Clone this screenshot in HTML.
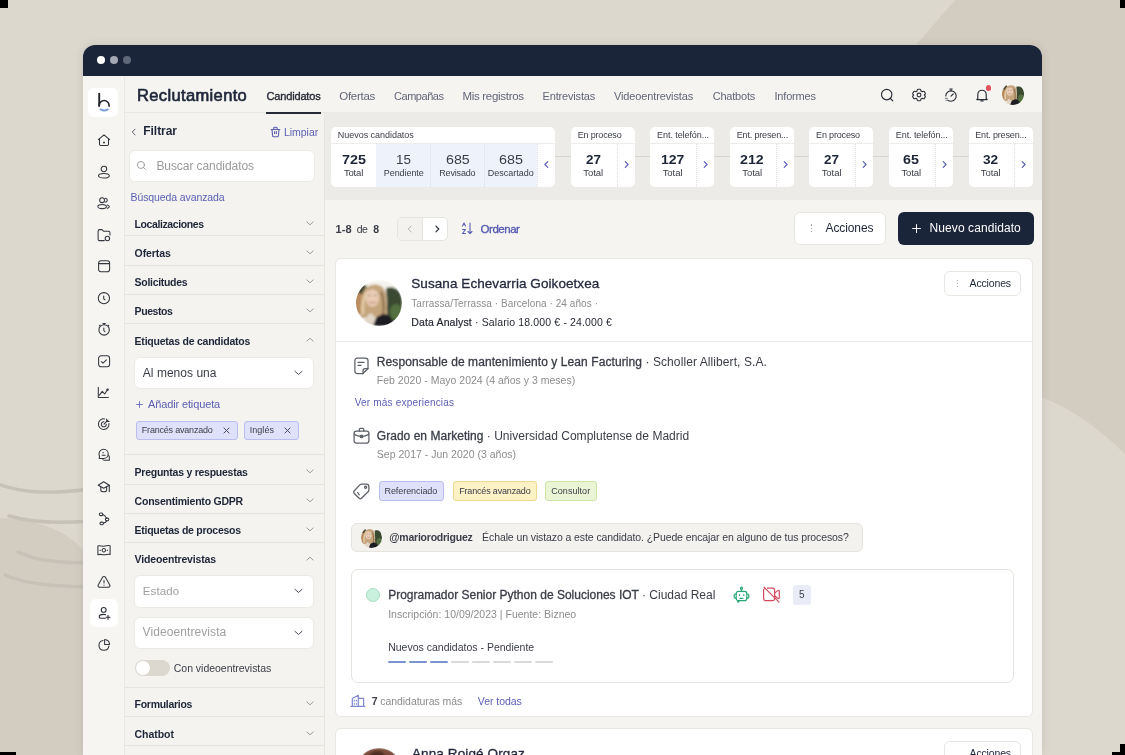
<!DOCTYPE html>
<html><head><meta charset="utf-8"><style>
html,body{margin:0;padding:0;width:1125px;height:755px;overflow:hidden;position:relative;background:#dcd8ce}
.t{position:absolute;white-space:nowrap;line-height:0;font-family:"Liberation Sans",sans-serif}
svg{overflow:visible}
</style></head><body><div id="root" style="position:absolute;left:0;top:0;width:1125px;height:755px;overflow:hidden;will-change:transform">
<svg width="1125" height="755" style="position:absolute;left:0;top:0">
<rect width="1125" height="755" fill="#dcd8ce"/>
<path d="M955 0 L916 45 C860 120 900 330 1043 398 Q1082 412 1125 454 L1125 0 Z" fill="#d3ccc1"/>
<path d="M0 518 C20 519 40 522 60 532 C75 540 83 549 90 560 L90 755 L0 755 Z" fill="#d3ccc1"/>
<g fill="none" stroke="#c7c2b8" stroke-width="3.4" stroke-linecap="round">
<path d="M-2 484 C20 492 45 495 90 489"/>
<path d="M9 516 C30 522 55 524 90 521"/>
<path d="M18 552 C35 560 55 563 90 563"/>
<path d="M5 575 C25 584 50 586 90 587"/>
</g>
</svg>
<div style="position:absolute;left:0px;top:0px;width:8px;height:8px;background:#000"></div>
<div style="position:absolute;left:1120px;top:0px;width:5px;height:8px;background:#000"></div>
<div style="position:absolute;left:0px;top:752px;width:16px;height:3px;background:#000"></div>
<div style="position:absolute;left:1120px;top:744px;width:5px;height:11px;background:#000"></div>
<div style="position:absolute;left:1112px;top:752px;width:13px;height:3px;background:#000"></div>
<div style="position:absolute;left:83px;top:45px;width:959px;height:710px;background:#f4f3ef;border-radius:12px 12px 0 0;box-shadow:0 0 9px rgba(70,60,50,0.13)"></div>
<div style="position:absolute;left:83px;top:45px;width:959px;height:31px;background:#1b2539;border-radius:12px 12px 0 0"></div>
<div style="position:absolute;left:96.5px;top:56px;width:8px;height:8px;border-radius:50%;background:#fff"></div>
<div style="position:absolute;left:109.5px;top:56px;width:8px;height:8px;border-radius:50%;background:#a3a8b2"></div>
<div style="position:absolute;left:122.5px;top:56px;width:8px;height:8px;border-radius:50%;background:#5f6878"></div>
<div style="position:absolute;left:83px;top:76px;width:41px;height:679px;background:#f6f5f1;border-right:1px solid #e9e7e2"></div>
<div style="position:absolute;left:125px;top:76px;width:917px;height:36px;background:#f5f4f0"></div>
<div style="position:absolute;left:125px;top:112px;width:199px;height:643px;background:#f4f3ef;border-right:1px solid #e7e5e0"></div>
<div style="position:absolute;left:125px;top:112px;width:200px;height:1px;background:#e9e7e2"></div>
<div style="position:absolute;left:325px;top:112px;width:717px;height:87.6px;background:#ecebe7"></div>
<div style="position:absolute;left:325px;top:199.6px;width:717px;height:555.4px;background:#f5f4f0"></div>
<div style="position:absolute;left:88px;top:88px;width:29.5px;height:29px;background:#fff;border-radius:6px"></div>
<svg style="position:absolute;left:88px;top:88px" width="30" height="30" viewBox="0 0 30 30">
<path d="M11.2 5.8 V18" fill="none" stroke="#22252d" stroke-width="1.9" stroke-linecap="round"/>
<path d="M11.2 17.5 A4.95 4.95 0 0 1 21.1 17.5 V18.2" fill="none" stroke="#22252d" stroke-width="1.6" stroke-linecap="round"/>
<path d="M12.6 21.4 Q16.2 23.6 19.8 21.4" fill="none" stroke="#76a0d8" stroke-width="1.9" stroke-linecap="round"/>
</svg>
<svg style="position:absolute;left:96.5px;top:133px" width="14" height="14" viewBox="0 0 14 14"><g fill="none" stroke="#32363f" stroke-width="1.05" stroke-linecap="round" stroke-linejoin="round"><path d="M1.4 6.6 L7 1.8 L12.6 6.6"/><path d="M2.5 5.6 V11.2 C2.5 12 3 12.5 3.7 12.5 H10.3 C11 12.5 11.5 12 11.5 11.2 V5.6"/><circle cx="7" cy="9.4" r="0.45" fill="#2a2e38"/></g></svg>
<svg style="position:absolute;left:96.5px;top:164.5px" width="14" height="14" viewBox="0 0 14 14"><g fill="none" stroke="#32363f" stroke-width="1.05" stroke-linecap="round" stroke-linejoin="round"><circle cx="6.9" cy="4" r="2.8"/><ellipse cx="6.9" cy="10.7" rx="5.4" ry="2.3"/></g></svg>
<svg style="position:absolute;left:96.5px;top:196px" width="14" height="14" viewBox="0 0 14 14"><g fill="none" stroke="#32363f" stroke-width="1.05" stroke-linecap="round" stroke-linejoin="round"><circle cx="5.1" cy="4.2" r="2.4"/><ellipse cx="5.1" cy="10.5" rx="4.3" ry="2.1"/><path d="M8.2 2.3 C9.5 2.5 10.3 3.3 10.3 4.3 C10.3 5.3 9.5 6.2 8.2 6.3"/><path d="M10.3 8.9 C11.6 9.3 12.3 10 12.3 10.6 C12.3 11.3 11.6 12 10.3 12.3"/></g></svg>
<svg style="position:absolute;left:96.5px;top:227.5px" width="14" height="14" viewBox="0 0 14 14"><g fill="none" stroke="#32363f" stroke-width="1.05" stroke-linecap="round" stroke-linejoin="round"><path d="M7.3 12.6 H2.8 C1.8 12.6 1.1 11.9 1.1 10.9 V3.3 C1.1 2.3 1.8 1.6 2.8 1.6 H5 L6.5 3.2 H11.3 C12.3 3.2 13 3.9 13 4.9 V7"/><circle cx="10.4" cy="10.5" r="2.2"/></g></svg>
<svg style="position:absolute;left:96.5px;top:259px" width="14" height="14" viewBox="0 0 14 14"><g fill="none" stroke="#32363f" stroke-width="1.05" stroke-linecap="round" stroke-linejoin="round"><rect x="1.6" y="1.8" width="11" height="11" rx="2.3"/><path d="M1.6 4.6 H12.6"/></g></svg>
<svg style="position:absolute;left:96.5px;top:290.5px" width="14" height="14" viewBox="0 0 14 14"><g fill="none" stroke="#32363f" stroke-width="1.05" stroke-linecap="round" stroke-linejoin="round"><circle cx="6.9" cy="7.2" r="5.6"/><path d="M6.7 5 V7.9 L8 8.8"/></g></svg>
<svg style="position:absolute;left:96.5px;top:322px" width="14" height="14" viewBox="0 0 14 14"><g fill="none" stroke="#32363f" stroke-width="1.05" stroke-linecap="round" stroke-linejoin="round"><circle cx="7.1" cy="7.9" r="5.2"/><path d="M5.9 1.5 H8.3 M7.1 1.5 V2.7 M2.4 3.8 L3.1 3.1 M11.8 3.8 L11.1 3.1 M6.8 6 V8.5 L7.9 9.6"/></g></svg>
<svg style="position:absolute;left:96.5px;top:353.5px" width="14" height="14" viewBox="0 0 14 14"><g fill="none" stroke="#32363f" stroke-width="1.05" stroke-linecap="round" stroke-linejoin="round"><rect x="1.6" y="1.8" width="11" height="11" rx="2.5"/><path d="M4.3 7.6 L6 9.1 L9.4 5.8"/></g></svg>
<svg style="position:absolute;left:96.5px;top:385px" width="14" height="14" viewBox="0 0 14 14"><g fill="none" stroke="#32363f" stroke-width="1.05" stroke-linecap="round" stroke-linejoin="round"><path d="M1.3 2.3 V12.4 H11.4"/><path d="M2.2 10.3 L5.3 6.4 L7.7 9 L10.6 4.6"/><circle cx="10.6" cy="4.6" r="0.7" fill="#2a2e38"/></g></svg>
<svg style="position:absolute;left:96.5px;top:416.5px" width="14" height="14" viewBox="0 0 14 14"><g fill="none" stroke="#32363f" stroke-width="1.05" stroke-linecap="round" stroke-linejoin="round"><path d="M12 6.6 A5.3 5.3 0 1 1 7.6 1.9"/><path d="M9.3 7.3 A2.5 2.5 0 1 1 6.9 4.8"/><path d="M7 7.2 L11 3.2 M9.6 2.1 L9.8 4.4 L12.1 4.6"/></g></svg>
<svg style="position:absolute;left:96.5px;top:448px" width="14" height="14" viewBox="0 0 14 14"><g fill="none" stroke="#32363f" stroke-width="1.05" stroke-linecap="round" stroke-linejoin="round"><path d="M2.2 10.4 L2.6 8.3 C2.2 7.6 2 6.8 2 6 C2 3.4 4.1 1.3 6.6 1.3 C9.2 1.3 11.2 3.4 11.2 6 C11.2 8.5 9.2 10.4 6.6 10.4 Z"/><path d="M5.9 4.8 H6.5 M5.2 7.2 H8.2"/><path d="M11.7 7.4 C12.3 8.2 12.5 9.5 12.3 10.8 L12.4 12.3 H7.8 C7.1 12.3 6.3 12 5.8 11.5"/></g></svg>
<svg style="position:absolute;left:96.5px;top:480px" width="14" height="14" viewBox="0 0 14 14"><g fill="none" stroke="#32363f" stroke-width="1.05" stroke-linecap="round" stroke-linejoin="round"><path d="M1.2 5.2 L6.7 1.8 L12.3 5.2 L6.7 8.3 Z"/><path d="M3.8 6.8 V10.3 C3.8 11.1 5 11.8 6.7 11.8 C8.4 11.8 9.6 11.1 9.6 10.3 V6.8"/><path d="M12.3 5.2 V11.6"/></g></svg>
<svg style="position:absolute;left:96.5px;top:511.5px" width="14" height="14" viewBox="0 0 14 14"><g fill="none" stroke="#32363f" stroke-width="1.05" stroke-linecap="round" stroke-linejoin="round"><rect x="2.4" y="1" width="3.4" height="2.6" rx="1.2"/><rect x="8.4" y="6.1" width="3.4" height="2.6" rx="1.2"/><rect x="3" y="10.1" width="3.4" height="2.6" rx="1.2"/><path d="M5.8 2.6 C7.3 3.3 8.6 4.4 9.4 6.1 M9.8 8.8 C9.2 10 8 10.8 6.4 11.3"/></g></svg>
<svg style="position:absolute;left:96.5px;top:543px" width="14" height="14" viewBox="0 0 14 14"><g fill="none" stroke="#32363f" stroke-width="1.05" stroke-linecap="round" stroke-linejoin="round"><path d="M0.9 3 C3 2.2 5 3.6 7 3.2 C9 2.8 11 2.2 13.1 2.8 V11.4 C11 10.7 9 12.1 7 11.8 C5 11.5 3 11 0.9 11.7 Z"/><circle cx="6.8" cy="7.2" r="1.7"/><path d="M3 7.2 H3.5 M10.2 7.2 H10.7"/></g></svg>
<svg style="position:absolute;left:96.5px;top:574.5px" width="14" height="14" viewBox="0 0 14 14"><g fill="none" stroke="#32363f" stroke-width="1.05" stroke-linecap="round" stroke-linejoin="round"><path d="M5.6 2.3 C6.2 1.2 7.8 1.2 8.4 2.3 L12.8 10 C13.4 11.1 12.7 12.3 11.4 12.3 H2.6 C1.3 12.3 0.6 11.1 1.2 10 Z"/><path d="M7 5.2 V7.9 M7 9.9 V10"/></g></svg>
<svg style="position:absolute;left:96.5px;top:637.5px" width="14" height="14" viewBox="0 0 14 14"><g fill="none" stroke="#32363f" stroke-width="1.05" stroke-linecap="round" stroke-linejoin="round"><path d="M6 2.4 A5 5 0 1 0 11.9 8.1"/><path d="M7.6 1.4 C10.3 1.6 12.4 3.7 12.6 6.4 H7.6 Z"/></g></svg>
<div style="position:absolute;left:89.5px;top:598.6px;width:28.299999999999997px;height:28.100000000000023px;background:#fff;border-radius:6px"></div>
<svg style="position:absolute;left:96.5px;top:606px" width="14" height="14" viewBox="0 0 14 14"><g fill="none" stroke="#2a2e38" stroke-width="1.1" stroke-linecap="round" stroke-linejoin="round"><circle cx="6.7" cy="3.9" r="2.4"/><path d="M8.6 8.8 C8 8.5 7.3 8.4 6.6 8.4 C4.1 8.4 2.2 9.5 2.2 10.8 C2.2 11.8 3 12.3 4 12.3 H8.3"/><path d="M11 9.2 V13.2 M9 11.2 H13"/></g></svg>
<div class="t" style="left:137.00px;top:94.78px;font-size:16.5px;letter-spacing:0.361px;color:#1d2538;-webkit-text-stroke:0.65px #1d2538;">Reclutamiento</div>
<div class="t" style="left:266.50px;top:95.69px;font-size:11.0px;letter-spacing:-0.161px;color:#262a36;-webkit-text-stroke:0.35px #262a36;">Candidatos</div>
<div class="t" style="left:339.30px;top:95.52px;font-size:11.5px;letter-spacing:-0.285px;color:#62667a;">Ofertas</div>
<div class="t" style="left:394.00px;top:95.69px;font-size:11.0px;letter-spacing:-0.457px;color:#62667a;">Campañas</div>
<div class="t" style="left:462.50px;top:95.52px;font-size:11.5px;letter-spacing:-0.307px;color:#62667a;">Mis registros</div>
<div class="t" style="left:542.50px;top:95.69px;font-size:11.0px;letter-spacing:-0.161px;color:#62667a;">Entrevistas</div>
<div class="t" style="left:614.00px;top:95.69px;font-size:11.0px;letter-spacing:-0.128px;color:#62667a;">Videoentrevistas</div>
<div class="t" style="left:712.70px;top:95.69px;font-size:11.0px;letter-spacing:-0.203px;color:#62667a;">Chatbots</div>
<div class="t" style="left:774.50px;top:95.69px;font-size:11.0px;letter-spacing:-0.184px;color:#62667a;">Informes</div>
<div style="position:absolute;left:266px;top:111.5px;width:55px;height:2.0px;background:#262a36"></div>
<svg style="position:absolute;left:880px;top:88px" width="14" height="14" viewBox="0 0 14 14"><g fill="none" stroke="#2a2e38" stroke-width="1.15" stroke-linecap="round" stroke-linejoin="round"><circle cx="6.7" cy="6.6" r="5.2"/><path d="M10.5 10.5 L12.8 12.8"/></g></svg>
<svg style="position:absolute;left:911.7px;top:88px" width="14" height="14" viewBox="0 0 14 14"><g fill="none" stroke="#2a2e38" stroke-width="1.1" stroke-linecap="round" stroke-linejoin="round"><path d="M6 1.2 H8 C8.4 1.2 8.6 1.5 8.7 1.8 L9 3 L10.2 3.7 L11.4 3.3 C11.8 3.2 12.1 3.3 12.3 3.6 L13.3 5.3 C13.5 5.6 13.4 6 13.2 6.2 L12.3 7 L13.2 7.8 C13.4 8 13.5 8.4 13.3 8.7 L12.3 10.4 C12.1 10.7 11.8 10.8 11.4 10.7 L10.2 10.3 L9 11 L8.7 12.2 C8.6 12.5 8.4 12.8 8 12.8 H6 C5.6 12.8 5.4 12.5 5.3 12.2 L5 11 L3.8 10.3 L2.6 10.7 C2.2 10.8 1.9 10.7 1.7 10.4 L0.7 8.7 C0.5 8.4 0.6 8 0.8 7.8 L1.7 7 L0.8 6.2 C0.6 6 0.5 5.6 0.7 5.3 L1.7 3.6 C1.9 3.3 2.2 3.2 2.6 3.3 L3.8 3.7 L5 3 L5.3 1.8 C5.4 1.5 5.6 1.2 6 1.2 Z"/><circle cx="7" cy="7" r="1.9"/></g></svg>
<svg style="position:absolute;left:943.7px;top:88px" width="14" height="14" viewBox="0 0 14 14"><g fill="none" stroke="#2a2e38" stroke-width="1.15" stroke-linecap="round" stroke-linejoin="round"><path d="M3.6 12.2 C5 13 6 13.2 7 13.2 C9.9 13.2 12.2 10.9 12.2 8 C12.2 5.1 9.9 2.8 7 2.8 C4.1 2.8 1.8 5.1 1.8 8"/><path d="M5.8 1 H8.2 M7 1 V2.8 M7 8.2 L9.2 6"/><path d="M1.3 10.3 H3.4 M1.8 12.2 H3.2" stroke="#8a8d96"/></g></svg>
<svg style="position:absolute;left:974.7px;top:88px" width="14" height="14" viewBox="0 0 14 14"><g fill="none" stroke="#2a2e38" stroke-width="1.15" stroke-linecap="round" stroke-linejoin="round"><path d="M2.8 10.3 V6.6 C2.8 4.1 4.6 2.2 7 2.2 C9.4 2.2 11.2 4.1 11.2 6.6 V10.3 L12.2 11.6 H1.8 Z"/><path d="M5.9 12.9 H8.1"/></g></svg>
<div style="position:absolute;left:985.8px;top:85.4px;width:5.6px;height:5.6px;border-radius:50%;background:#e5505c"></div>
<svg style="position:absolute;left:1001.5px;top:83.0px" width="22" height="22" viewBox="0 0 46 46">
<defs><clipPath id="ac1"><circle cx="23" cy="23" r="23"/></clipPath><filter id="af1" x="-10%" y="-10%" width="120%" height="120%"><feGaussianBlur stdDeviation="1.15"/></filter></defs>
<g clip-path="url(#ac1)"><g filter="url(#af1)"><rect width="46" height="46" fill="#f6f4ef"/>
<ellipse cx="5" cy="9" rx="6" ry="6" fill="#4a4a34"/>
<ellipse cx="3" cy="24" rx="6" ry="11" fill="#b98a5c"/>
<path d="M30 8 C38 5 46 10 46 20 L46 46 L28 46 L31 24 Z" fill="#3b4a33"/>
<ellipse cx="40" cy="32" rx="6" ry="8" fill="#55703f"/>
<path d="M5 38 C3 26 5 11 11 7 C17 3 25 4 28 9 C32 15 30 28 32 37 Z" fill="#c4a57e"/>
<path d="M7 34 C6 25 8 16 12 11" stroke="#e2cba6" stroke-width="3" fill="none"/>
<path d="M25 12 C28 18 28 28 27 36" stroke="#8a6a4a" stroke-width="2" fill="none"/>
<ellipse cx="16.5" cy="18" rx="6.6" ry="8.8" fill="#e9ccb4"/>
<path d="M12 15.5 H14.5 M18 15.5 H20.5" stroke="#7a5a48" stroke-width="0.9"/>
<path d="M13 22 Q16.5 24.3 20 22" stroke="#b07a6a" stroke-width="1" fill="none"/>
<path d="M15 46 C17 39 22 35 28 34 C33 34 36 38 38 46 Z" fill="#1c1d22"/>
<path d="M7 46 C8 40 11 35 15 33 L20 38 L17 46 Z" fill="#e3d6c8"/></g></g></svg>
<svg style="position:absolute;left:129.2px;top:126.5px" width="10" height="10" viewBox="0 0 14 14"><g fill="none" stroke="#4a4e5a" stroke-width="1.3" stroke-linecap="round" stroke-linejoin="round"><path d="M8.5 3 L4.5 7 L8.5 11"/></g></svg>
<div class="t" style="left:143.30px;top:131.04px;font-size:12.0px;letter-spacing:-0.051px;color:#1d2538;"><span style="font-weight:700;">Filtrar</span></div>
<svg style="position:absolute;left:270px;top:126px" width="11" height="12" viewBox="0 0 11 12"><g fill="none" stroke="#5a5eac" stroke-width="1.1" stroke-linecap="round" stroke-linejoin="round"><path d="M1.2 3.5 H9.8"/><path d="M3.8 3.5 V2.2 C3.8 1.6 4.2 1.2 4.8 1.2 H6.2 C6.8 1.2 7.2 1.6 7.2 2.2 V3.5"/><path d="M2 3.5 L2.6 10 C2.7 10.6 3.1 10.8 3.6 10.8 H7.4 C7.9 10.8 8.3 10.6 8.4 10 L9 3.5"/><path d="M4.6 5.6 V7.6 M6.4 5.6 V7.6"/></g></svg>
<div class="t" style="left:284.00px;top:132.46px;font-size:10.5px;letter-spacing:-0.038px;color:#5b5fb4;">Limpiar</div>
<div style="position:absolute;left:128.5px;top:149.5px;width:186.5px;height:32.0px;background:#fff;border:1px solid #eceae5;border-radius:6px;box-sizing:border-box"></div>
<svg style="position:absolute;left:136.3px;top:159.9px" width="11" height="11" viewBox="0 0 14 14"><g fill="none" stroke="#9a9a9a" stroke-width="1.2" stroke-linecap="round" stroke-linejoin="round"><circle cx="6.3" cy="6.3" r="4.5"/><path d="M9.6 9.6 L12 12"/></g></svg>
<div class="t" style="left:156.40px;top:165.54px;font-size:12.0px;letter-spacing:-0.070px;color:#9b9b9b;">Buscar candidatos</div>
<div class="t" style="left:130.60px;top:196.86px;font-size:10.5px;letter-spacing:-0.110px;color:#5b5fb4;">Búsqueda avanzada</div>
<div class="t" style="left:134.60px;top:223.76px;font-size:10.5px;letter-spacing:-0.407px;color:#1d2538;"><span style="font-weight:700;">Localizaciones</span></div>
<svg style="position:absolute;left:305.3px;top:217.89999999999998px" width="10" height="10" viewBox="0 0 14 14"><g fill="none" stroke="#8a8d96" stroke-width="1.2" stroke-linecap="round" stroke-linejoin="round"><path d="M2.5 5.5 L7 9.5 L11.5 5.5"/></g></svg>
<div class="t" style="left:134.60px;top:252.86px;font-size:10.5px;letter-spacing:-0.093px;color:#1d2538;"><span style="font-weight:700;">Ofertas</span></div>
<svg style="position:absolute;left:305.3px;top:247.0px" width="10" height="10" viewBox="0 0 14 14"><g fill="none" stroke="#8a8d96" stroke-width="1.2" stroke-linecap="round" stroke-linejoin="round"><path d="M2.5 5.5 L7 9.5 L11.5 5.5"/></g></svg>
<div class="t" style="left:134.60px;top:282.06px;font-size:10.5px;letter-spacing:-0.302px;color:#1d2538;"><span style="font-weight:700;">Solicitudes</span></div>
<svg style="position:absolute;left:305.3px;top:276.2px" width="10" height="10" viewBox="0 0 14 14"><g fill="none" stroke="#8a8d96" stroke-width="1.2" stroke-linecap="round" stroke-linejoin="round"><path d="M2.5 5.5 L7 9.5 L11.5 5.5"/></g></svg>
<div class="t" style="left:134.60px;top:311.06px;font-size:10.5px;letter-spacing:-0.441px;color:#1d2538;"><span style="font-weight:700;">Puestos</span></div>
<svg style="position:absolute;left:305.3px;top:305.2px" width="10" height="10" viewBox="0 0 14 14"><g fill="none" stroke="#8a8d96" stroke-width="1.2" stroke-linecap="round" stroke-linejoin="round"><path d="M2.5 5.5 L7 9.5 L11.5 5.5"/></g></svg>
<div class="t" style="left:134.60px;top:340.96px;font-size:10.5px;letter-spacing:-0.231px;color:#1d2538;"><span style="font-weight:700;">Etiquetas de candidatos</span></div>
<svg style="position:absolute;left:305.3px;top:335.09999999999997px" width="10" height="10" viewBox="0 0 14 14"><g fill="none" stroke="#8a8d96" stroke-width="1.2" stroke-linecap="round" stroke-linejoin="round"><path d="M2.5 8.5 L7 4.5 L11.5 8.5"/></g></svg>
<div class="t" style="left:134.60px;top:471.76px;font-size:10.5px;letter-spacing:-0.246px;color:#1d2538;"><span style="font-weight:700;">Preguntas y respuestas</span></div>
<svg style="position:absolute;left:305.3px;top:465.9px" width="10" height="10" viewBox="0 0 14 14"><g fill="none" stroke="#8a8d96" stroke-width="1.2" stroke-linecap="round" stroke-linejoin="round"><path d="M2.5 5.5 L7 9.5 L11.5 5.5"/></g></svg>
<div class="t" style="left:134.60px;top:500.96px;font-size:10.5px;letter-spacing:-0.222px;color:#1d2538;"><span style="font-weight:700;">Consentimiento GDPR</span></div>
<svg style="position:absolute;left:305.3px;top:495.09999999999997px" width="10" height="10" viewBox="0 0 14 14"><g fill="none" stroke="#8a8d96" stroke-width="1.2" stroke-linecap="round" stroke-linejoin="round"><path d="M2.5 5.5 L7 9.5 L11.5 5.5"/></g></svg>
<div class="t" style="left:134.60px;top:530.26px;font-size:10.5px;letter-spacing:-0.282px;color:#1d2538;"><span style="font-weight:700;">Etiquetas de procesos</span></div>
<svg style="position:absolute;left:305.3px;top:524.4000000000001px" width="10" height="10" viewBox="0 0 14 14"><g fill="none" stroke="#8a8d96" stroke-width="1.2" stroke-linecap="round" stroke-linejoin="round"><path d="M2.5 5.5 L7 9.5 L11.5 5.5"/></g></svg>
<div class="t" style="left:134.60px;top:559.46px;font-size:10.5px;letter-spacing:-0.156px;color:#1d2538;"><span style="font-weight:700;">Videoentrevistas</span></div>
<svg style="position:absolute;left:305.3px;top:553.6px" width="10" height="10" viewBox="0 0 14 14"><g fill="none" stroke="#8a8d96" stroke-width="1.2" stroke-linecap="round" stroke-linejoin="round"><path d="M2.5 8.5 L7 4.5 L11.5 8.5"/></g></svg>
<div class="t" style="left:134.60px;top:704.26px;font-size:10.5px;letter-spacing:-0.288px;color:#1d2538;"><span style="font-weight:700;">Formularios</span></div>
<svg style="position:absolute;left:305.3px;top:698.4000000000001px" width="10" height="10" viewBox="0 0 14 14"><g fill="none" stroke="#8a8d96" stroke-width="1.2" stroke-linecap="round" stroke-linejoin="round"><path d="M2.5 5.5 L7 9.5 L11.5 5.5"/></g></svg>
<div class="t" style="left:134.60px;top:733.56px;font-size:10.5px;letter-spacing:-0.060px;color:#1d2538;"><span style="font-weight:700;">Chatbot</span></div>
<svg style="position:absolute;left:305.3px;top:727.7px" width="10" height="10" viewBox="0 0 14 14"><g fill="none" stroke="#8a8d96" stroke-width="1.2" stroke-linecap="round" stroke-linejoin="round"><path d="M2.5 5.5 L7 9.5 L11.5 5.5"/></g></svg>
<div style="position:absolute;left:125px;top:235px;width:199px;height:1px;background:#e6e4df"></div>
<div style="position:absolute;left:125px;top:265px;width:199px;height:1px;background:#e6e4df"></div>
<div style="position:absolute;left:125px;top:294px;width:199px;height:1px;background:#e6e4df"></div>
<div style="position:absolute;left:125px;top:323px;width:199px;height:1px;background:#e6e4df"></div>
<div style="position:absolute;left:125px;top:454px;width:199px;height:1px;background:#e6e4df"></div>
<div style="position:absolute;left:125px;top:484px;width:199px;height:1px;background:#e6e4df"></div>
<div style="position:absolute;left:125px;top:513px;width:199px;height:1px;background:#e6e4df"></div>
<div style="position:absolute;left:125px;top:542px;width:199px;height:1px;background:#e6e4df"></div>
<div style="position:absolute;left:125px;top:687px;width:199px;height:1px;background:#e6e4df"></div>
<div style="position:absolute;left:125px;top:716px;width:199px;height:1px;background:#e6e4df"></div>
<div style="position:absolute;left:125px;top:745px;width:199px;height:1px;background:#e6e4df"></div>
<div style="position:absolute;left:134px;top:356.5px;width:179.5px;height:32.0px;background:#fff;border:1px solid #eceae5;border-radius:6px;box-sizing:border-box"></div>
<div class="t" style="left:142.80px;top:372.54px;font-size:12.0px;letter-spacing:0.028px;color:#3a3d48;">Al menos una</div>
<svg style="position:absolute;left:292.7px;top:367.3px" width="11" height="11" viewBox="0 0 14 14"><g fill="none" stroke="#3b404c" stroke-width="1.2" stroke-linecap="round" stroke-linejoin="round"><path d="M2.5 5.5 L7 9.5 L11.5 5.5"/></g></svg>
<svg style="position:absolute;left:134.8px;top:400.0px" width="9" height="9" viewBox="0 0 14 14"><g fill="none" stroke="#5b5fb4" stroke-width="1.3" stroke-linecap="round" stroke-linejoin="round"><path d="M7 2.5 V11.5 M2.5 7 H11.5"/></g></svg>
<div class="t" style="left:148.00px;top:404.39px;font-size:11.0px;letter-spacing:-0.129px;color:#5b5fb4;">Añadir etiqueta</div>
<div style="position:absolute;left:136px;top:420.5px;width:101.5px;height:19.5px;background:#dfe1fb;border:1px solid #b9bdf0;border-radius:3px;box-sizing:border-box"></div>
<div class="t" style="left:141.80px;top:430.28px;font-size:9.0px;letter-spacing:-0.203px;color:#3a3d48;">Francés avanzado</div>
<svg style="position:absolute;left:222.0px;top:425.8px" width="9" height="9" viewBox="0 0 14 14"><g fill="none" stroke="#3b404c" stroke-width="1.4" stroke-linecap="round" stroke-linejoin="round"><path d="M3 3 L11 11 M11 3 L3 11"/></g></svg>
<div style="position:absolute;left:244px;top:420.5px;width:54.5px;height:19.5px;background:#dfe1fb;border:1px solid #b9bdf0;border-radius:3px;box-sizing:border-box"></div>
<div class="t" style="left:249.70px;top:430.28px;font-size:9.0px;letter-spacing:0.058px;color:#3a3d48;">Inglés</div>
<svg style="position:absolute;left:282.9px;top:425.8px" width="9" height="9" viewBox="0 0 14 14"><g fill="none" stroke="#3b404c" stroke-width="1.4" stroke-linecap="round" stroke-linejoin="round"><path d="M3 3 L11 11 M11 3 L3 11"/></g></svg>
<div style="position:absolute;left:134px;top:575px;width:179.5px;height:32.5px;background:#fff;border:1px solid #eceae5;border-radius:6px;box-sizing:border-box"></div>
<div class="t" style="left:142.80px;top:590.52px;font-size:11.5px;letter-spacing:0.120px;color:#a0a0a0;">Estado</div>
<svg style="position:absolute;left:292.7px;top:585.0px" width="11" height="11" viewBox="0 0 14 14"><g fill="none" stroke="#3b404c" stroke-width="1.2" stroke-linecap="round" stroke-linejoin="round"><path d="M2.5 5.5 L7 9.5 L11.5 5.5"/></g></svg>
<div style="position:absolute;left:134px;top:617px;width:179.5px;height:31.5px;background:#fff;border:1px solid #eceae5;border-radius:6px;box-sizing:border-box"></div>
<div class="t" style="left:142.60px;top:632.34px;font-size:12.0px;letter-spacing:0.085px;color:#a0a0a0;">Videoentrevista</div>
<svg style="position:absolute;left:292.7px;top:626.5px" width="11" height="11" viewBox="0 0 14 14"><g fill="none" stroke="#3b404c" stroke-width="1.2" stroke-linecap="round" stroke-linejoin="round"><path d="M2.5 5.5 L7 9.5 L11.5 5.5"/></g></svg>
<div style="position:absolute;left:134.5px;top:659.5px;width:35.5px;height:16.0px;background:#dcd8d0;border-radius:8px"></div>
<div style="position:absolute;left:135.5px;top:660.5px;width:14px;height:14px;border-radius:50%;background:#fff"></div>
<div class="t" style="left:173.80px;top:667.76px;font-size:10.5px;letter-spacing:-0.029px;color:#3a3d48;">Con videoentrevistas</div>
<div style="position:absolute;left:555px;top:156px;width:478px;height:1px;background:#d6d4ce"></div>
<div style="position:absolute;left:331px;top:127px;width:224px;height:60px;background:#fff;border-radius:5px"></div>
<div style="position:absolute;left:331px;top:143px;width:224px;height:1px;background:#eeede9"></div>
<div style="position:absolute;left:376px;top:144px;width:161.29999999999995px;height:43px;background:#eef2fb"></div>
<div style="position:absolute;left:430px;top:144px;width:1px;height:43px;border-left:1px dotted #d8dde8"></div>
<div style="position:absolute;left:483.8px;top:144px;width:1.0px;height:43px;border-left:1px dotted #d8dde8"></div>
<div style="position:absolute;left:537.3px;top:144px;width:1.0px;height:43px;border-left:1px dotted #dedede"></div>
<div class="t" style="left:337.80px;top:134.78px;font-size:9.0px;letter-spacing:-0.034px;color:#3a3d48;">Nuevos candidatos</div>
<div class="t" style="left:341.60px;top:160.44px;font-size:12.0px;letter-spacing:0.000px;color:#1d2538;transform:scaleX(1.1990);transform-origin:0 0;"><span style="font-weight:700;">725</span></div>
<div class="t" style="left:343.95px;top:172.51px;font-size:9.5px;letter-spacing:-0.191px;color:#3a3d48;">Total</div>
<div class="t" style="left:396.35px;top:160.44px;font-size:12.0px;letter-spacing:0.000px;color:#3a3d48;transform:scaleX(1.1166);transform-origin:0 0;">15</div>
<div class="t" style="left:383.80px;top:172.68px;font-size:9.0px;letter-spacing:-0.067px;color:#3a3d48;">Pendiente</div>
<div class="t" style="left:445.55px;top:160.44px;font-size:12.0px;letter-spacing:0.000px;color:#3a3d48;transform:scaleX(1.1841);transform-origin:0 0;">685</div>
<div class="t" style="left:439.25px;top:172.68px;font-size:9.0px;letter-spacing:-0.174px;color:#3a3d48;">Revisado</div>
<div class="t" style="left:498.85px;top:160.44px;font-size:12.0px;letter-spacing:0.000px;color:#3a3d48;transform:scaleX(1.1940);transform-origin:0 0;">685</div>
<div class="t" style="left:487.80px;top:172.68px;font-size:9.0px;letter-spacing:-0.003px;color:#3a3d48;">Descartado</div>
<svg style="position:absolute;left:542.1px;top:159.9px" width="9" height="9" viewBox="0 0 14 14"><g fill="none" stroke="#5257b8" stroke-width="1.7" stroke-linecap="round" stroke-linejoin="round"><path d="M9 2.5 L4.5 7 L9 11.5"/></g></svg>
<div style="position:absolute;left:571px;top:127px;width:64px;height:60px;background:#fff;border-radius:5px"></div>
<div style="position:absolute;left:571px;top:143px;width:64px;height:1px;background:#eeede9"></div>
<div style="position:absolute;left:616.6px;top:144px;width:1.0px;height:43px;border-left:1px dotted #dedede"></div>
<div class="t" style="left:577.70px;top:134.78px;font-size:9.0px;letter-spacing:-0.170px;color:#3a3d48;">En proceso</div>
<div class="t" style="left:585.75px;top:160.44px;font-size:12.0px;letter-spacing:0.000px;color:#1d2538;transform:scaleX(1.1166);transform-origin:0 0;"><span style="font-weight:700;">27</span></div>
<div class="t" style="left:583.30px;top:172.51px;font-size:9.5px;letter-spacing:-0.066px;color:#3a3d48;">Total</div>
<svg style="position:absolute;left:621.6px;top:159.9px" width="9" height="9" viewBox="0 0 14 14"><g fill="none" stroke="#5257b8" stroke-width="1.7" stroke-linecap="round" stroke-linejoin="round"><path d="M5 2.5 L9.5 7 L5 11.5"/></g></svg>
<div style="position:absolute;left:650.4px;top:127px;width:64.0px;height:60px;background:#fff;border-radius:5px"></div>
<div style="position:absolute;left:650.4px;top:143px;width:64.0px;height:1px;background:#eeede9"></div>
<div style="position:absolute;left:696.0px;top:144px;width:1.0px;height:43px;border-left:1px dotted #dedede"></div>
<div class="t" style="left:657.10px;top:134.78px;font-size:9.0px;letter-spacing:-0.074px;color:#3a3d48;">Ent. telefón...</div>
<div class="t" style="left:660.95px;top:160.44px;font-size:12.0px;letter-spacing:0.000px;color:#1d2538;transform:scaleX(1.1641);transform-origin:0 0;"><span style="font-weight:700;">127</span></div>
<div class="t" style="left:662.70px;top:172.51px;font-size:9.5px;letter-spacing:-0.066px;color:#3a3d48;">Total</div>
<svg style="position:absolute;left:701.0px;top:159.9px" width="9" height="9" viewBox="0 0 14 14"><g fill="none" stroke="#5257b8" stroke-width="1.7" stroke-linecap="round" stroke-linejoin="round"><path d="M5 2.5 L9.5 7 L5 11.5"/></g></svg>
<div style="position:absolute;left:730px;top:127px;width:64px;height:60px;background:#fff;border-radius:5px"></div>
<div style="position:absolute;left:730px;top:143px;width:64px;height:1px;background:#eeede9"></div>
<div style="position:absolute;left:775.6px;top:144px;width:1.0px;height:43px;border-left:1px dotted #dedede"></div>
<div class="t" style="left:736.70px;top:134.78px;font-size:9.0px;letter-spacing:-0.156px;color:#3a3d48;">Ent. presen...</div>
<div class="t" style="left:740.35px;top:160.44px;font-size:12.0px;letter-spacing:0.000px;color:#1d2538;transform:scaleX(1.1841);transform-origin:0 0;"><span style="font-weight:700;">212</span></div>
<div class="t" style="left:742.30px;top:172.51px;font-size:9.5px;letter-spacing:-0.066px;color:#3a3d48;">Total</div>
<svg style="position:absolute;left:780.6px;top:159.9px" width="9" height="9" viewBox="0 0 14 14"><g fill="none" stroke="#5257b8" stroke-width="1.7" stroke-linecap="round" stroke-linejoin="round"><path d="M5 2.5 L9.5 7 L5 11.5"/></g></svg>
<div style="position:absolute;left:809.4px;top:127px;width:64.0px;height:60px;background:#fff;border-radius:5px"></div>
<div style="position:absolute;left:809.4px;top:143px;width:64.0px;height:1px;background:#eeede9"></div>
<div style="position:absolute;left:855.0px;top:144px;width:1.0px;height:43px;border-left:1px dotted #dedede"></div>
<div class="t" style="left:816.10px;top:134.78px;font-size:9.0px;letter-spacing:-0.170px;color:#3a3d48;">En proceso</div>
<div class="t" style="left:824.15px;top:160.44px;font-size:12.0px;letter-spacing:0.000px;color:#1d2538;transform:scaleX(1.1166);transform-origin:0 0;"><span style="font-weight:700;">27</span></div>
<div class="t" style="left:821.70px;top:172.51px;font-size:9.5px;letter-spacing:-0.066px;color:#3a3d48;">Total</div>
<svg style="position:absolute;left:860.0px;top:159.9px" width="9" height="9" viewBox="0 0 14 14"><g fill="none" stroke="#5257b8" stroke-width="1.7" stroke-linecap="round" stroke-linejoin="round"><path d="M5 2.5 L9.5 7 L5 11.5"/></g></svg>
<div style="position:absolute;left:889.1px;top:127px;width:64.0px;height:60px;background:#fff;border-radius:5px"></div>
<div style="position:absolute;left:889.1px;top:143px;width:64.0px;height:1px;background:#eeede9"></div>
<div style="position:absolute;left:934.7px;top:144px;width:1.0px;height:43px;border-left:1px dotted #dedede"></div>
<div class="t" style="left:895.80px;top:134.78px;font-size:9.0px;letter-spacing:-0.074px;color:#3a3d48;">Ent. telefón...</div>
<div class="t" style="left:903.35px;top:160.44px;font-size:12.0px;letter-spacing:0.000px;color:#1d2538;transform:scaleX(1.1915);transform-origin:0 0;"><span style="font-weight:700;">65</span></div>
<div class="t" style="left:901.40px;top:172.51px;font-size:9.5px;letter-spacing:-0.066px;color:#3a3d48;">Total</div>
<svg style="position:absolute;left:939.7px;top:159.9px" width="9" height="9" viewBox="0 0 14 14"><g fill="none" stroke="#5257b8" stroke-width="1.7" stroke-linecap="round" stroke-linejoin="round"><path d="M5 2.5 L9.5 7 L5 11.5"/></g></svg>
<div style="position:absolute;left:968.5px;top:127px;width:64.0px;height:60px;background:#fff;border-radius:5px"></div>
<div style="position:absolute;left:968.5px;top:143px;width:64.0px;height:1px;background:#eeede9"></div>
<div style="position:absolute;left:1014.1px;top:144px;width:1.0px;height:43px;border-left:1px dotted #dedede"></div>
<div class="t" style="left:975.20px;top:134.78px;font-size:9.0px;letter-spacing:-0.156px;color:#3a3d48;">Ent. presen...</div>
<div class="t" style="left:983.10px;top:160.44px;font-size:12.0px;letter-spacing:0.000px;color:#1d2538;transform:scaleX(1.1391);transform-origin:0 0;"><span style="font-weight:700;">32</span></div>
<div class="t" style="left:980.80px;top:172.51px;font-size:9.5px;letter-spacing:-0.066px;color:#3a3d48;">Total</div>
<svg style="position:absolute;left:1019.1px;top:159.9px" width="9" height="9" viewBox="0 0 14 14"><g fill="none" stroke="#5257b8" stroke-width="1.7" stroke-linecap="round" stroke-linejoin="round"><path d="M5 2.5 L9.5 7 L5 11.5"/></g></svg>
<div class="t" style="left:335.40px;top:228.99px;font-size:11.0px;letter-spacing:0.203px;color:#3a3d48;"><span style="font-weight:700;">1-8</span></div>
<div class="t" style="left:356.80px;top:229.16px;font-size:10.5px;letter-spacing:-0.576px;color:#3a3d48;">de</div>
<div class="t" style="left:373.20px;top:229.16px;font-size:10.5px;letter-spacing:-0.038px;color:#3a3d48;"><span style="font-weight:700;">8</span></div>
<div style="position:absolute;left:396.5px;top:216.5px;width:51.5px;height:24.5px;background:#fff;border:1px solid #e6e4df;border-radius:5px;box-sizing:border-box"></div>
<div style="position:absolute;left:397.5px;top:217.5px;width:24.80000000000001px;height:22.5px;background:#f3f2ee;border-radius:4px 0 0 4px"></div>
<div style="position:absolute;left:422.3px;top:217.5px;width:1.0px;height:22.5px;background:#e6e4df"></div>
<svg style="position:absolute;left:405.0px;top:223.5px" width="10" height="10" viewBox="0 0 14 14"><g fill="none" stroke="#a9a9a9" stroke-width="1.3" stroke-linecap="round" stroke-linejoin="round"><path d="M8.5 3 L4.5 7 L8.5 11"/></g></svg>
<svg style="position:absolute;left:431.5px;top:223.5px" width="10" height="10" viewBox="0 0 14 14"><g fill="none" stroke="#2a2e38" stroke-width="1.6" stroke-linecap="round" stroke-linejoin="round"><path d="M5.5 3 L9.5 7 L5.5 11"/></g></svg>
<svg style="position:absolute;left:460px;top:221px" width="14" height="15" viewBox="0 0 14 15"><g fill="none" stroke="#5b5fb4" stroke-width="1.1" stroke-linecap="round" stroke-linejoin="round">
<path d="M2.5 5 L4 2 L5.5 5"/><path d="M2.5 8.5 H5.5 L2.5 12.5 H5.5"/><path d="M10 2 V12.5 M8 10.5 L10 12.5 L12 10.5"/></g></svg>
<div class="t" style="left:480.60px;top:228.82px;font-size:11.5px;letter-spacing:-0.480px;color:#5257b0;-webkit-text-stroke:0.45px #5257b0;"><span style="-webkit-text-stroke:0.3px #5257b0;">Ordenar</span></div>
<div style="position:absolute;left:793.5px;top:212px;width:92.0px;height:32.5px;background:#fff;border:1px solid #e8e6e1;border-radius:6px;box-sizing:border-box"></div>
<div style="position:absolute;left:811px;top:224.2px;width:1.4px;height:1.4px;border-radius:50%;background:#8a8d96"></div>
<div style="position:absolute;left:811px;top:227.5px;width:1.4px;height:1.4px;border-radius:50%;background:#8a8d96"></div>
<div style="position:absolute;left:811px;top:230.8px;width:1.4px;height:1.4px;border-radius:50%;background:#8a8d96"></div>
<div class="t" style="left:825.50px;top:228.34px;font-size:12.0px;letter-spacing:-0.099px;color:#1d2538;">Acciones</div>
<div style="position:absolute;left:897.5px;top:212px;width:136.0px;height:33px;background:#1b2539;border-radius:6px"></div>
<svg style="position:absolute;left:911.1px;top:223.0px" width="11" height="11" viewBox="0 0 14 14"><g fill="none" stroke="#fff" stroke-width="1.3" stroke-linecap="round" stroke-linejoin="round"><path d="M7 2 V12 M2 7 H12"/></g></svg>
<div class="t" style="left:929.60px;top:228.34px;font-size:12.0px;letter-spacing:0.081px;color:#ffffff;">Nuevo candidato</div>
<div style="position:absolute;left:335px;top:257.5px;width:697.5px;height:459.5px;background:#fff;border:1px solid #e9e7e2;border-radius:6px;box-sizing:border-box"></div>
<svg style="position:absolute;left:355.7px;top:280.0px" width="46" height="46" viewBox="0 0 46 46">
<defs><clipPath id="ac2"><circle cx="23" cy="23" r="23"/></clipPath><filter id="af2" x="-10%" y="-10%" width="120%" height="120%"><feGaussianBlur stdDeviation="0.80"/></filter></defs>
<g clip-path="url(#ac2)"><g filter="url(#af2)"><rect width="46" height="46" fill="#f6f4ef"/>
<ellipse cx="5" cy="9" rx="6" ry="6" fill="#4a4a34"/>
<ellipse cx="3" cy="24" rx="6" ry="11" fill="#b98a5c"/>
<path d="M30 8 C38 5 46 10 46 20 L46 46 L28 46 L31 24 Z" fill="#3b4a33"/>
<ellipse cx="40" cy="32" rx="6" ry="8" fill="#55703f"/>
<path d="M5 38 C3 26 5 11 11 7 C17 3 25 4 28 9 C32 15 30 28 32 37 Z" fill="#c4a57e"/>
<path d="M7 34 C6 25 8 16 12 11" stroke="#e2cba6" stroke-width="3" fill="none"/>
<path d="M25 12 C28 18 28 28 27 36" stroke="#8a6a4a" stroke-width="2" fill="none"/>
<ellipse cx="16.5" cy="18" rx="6.6" ry="8.8" fill="#e9ccb4"/>
<path d="M12 15.5 H14.5 M18 15.5 H20.5" stroke="#7a5a48" stroke-width="0.9"/>
<path d="M13 22 Q16.5 24.3 20 22" stroke="#b07a6a" stroke-width="1" fill="none"/>
<path d="M15 46 C17 39 22 35 28 34 C33 34 36 38 38 46 Z" fill="#1c1d22"/>
<path d="M7 46 C8 40 11 35 15 33 L20 38 L17 46 Z" fill="#e3d6c8"/></g></g></svg>
<div class="t" style="left:411.30px;top:284.42px;font-size:13.5px;letter-spacing:0.069px;color:#262a3e;"><span style="-webkit-text-stroke:0.3px #262a3e;">Susana Echevarria Goikoetxea</span></div>
<div class="t" style="left:411.30px;top:303.94px;font-size:10.0px;letter-spacing:0.068px;color:#8c8c8c;">Tarrassa/Terrassa · Barcelona · 24 años ·</div>
<div class="t" style="left:411.30px;top:321.76px;font-size:10.5px;letter-spacing:0.138px;color:#262a36;"><span style="-webkit-text-stroke:0.2px #262a36;">Data Analyst</span> · Salario 18.000 € - 24.000 €</div>
<div style="position:absolute;left:943.5px;top:271px;width:77.5px;height:25px;background:#fff;border:1px solid #e8e6e1;border-radius:6px;box-sizing:border-box"></div>
<div style="position:absolute;left:957px;top:279.7px;width:1.2px;height:1.2px;border-radius:50%;background:#8a8d96"></div>
<div style="position:absolute;left:957px;top:282.7px;width:1.2px;height:1.2px;border-radius:50%;background:#8a8d96"></div>
<div style="position:absolute;left:957px;top:285.7px;width:1.2px;height:1.2px;border-radius:50%;background:#8a8d96"></div>
<div class="t" style="left:969.60px;top:283.36px;font-size:10.5px;letter-spacing:-0.158px;color:#1d2538;">Acciones</div>
<div style="position:absolute;left:336px;top:341px;width:695.5px;height:1px;background:#e9e7e2"></div>
<svg style="position:absolute;left:353px;top:356px" width="18" height="18" viewBox="0 0 18 18"><g fill="none" stroke="#5c6068" stroke-width="1.25" stroke-linecap="round" stroke-linejoin="round"><path d="M10 17.5 H4.4 C2.9 17.5 1.9 16.5 1.9 15 V4.7 C1.9 3.2 2.9 2.2 4.4 2.2 H12.5 C14 2.2 15 3.2 15 4.7 V12.5 Z"/><path d="M10 17.5 V14.8 C10 13.5 10.8 12.5 12 12.5 H15"/><path d="M5 6.3 H11 M5 9.3 H8"/></g></svg>
<div class="t" style="left:376.80px;top:362.14px;font-size:12.0px;letter-spacing:0.083px;color:#3a3d48;"><span style="-webkit-text-stroke:0.3px #3a3d48;">Responsable de mantenimiento y Lean Facturing</span> · Scholler Allibert, S.A.</div>
<div class="t" style="left:376.80px;top:380.46px;font-size:10.5px;letter-spacing:0.014px;color:#8c8c8c;">Feb 2020 - Mayo 2024 (4 años y 3 meses)</div>
<div class="t" style="left:354.80px;top:402.54px;font-size:10.0px;letter-spacing:0.189px;color:#5b5fb4;">Ver más experiencias</div>
<svg style="position:absolute;left:353px;top:426px" width="18" height="18" viewBox="0 0 18 18"><g fill="none" stroke="#5c6068" stroke-width="1.25" stroke-linecap="round" stroke-linejoin="round"><rect x="1.1" y="5.1" width="14.8" height="11.9" rx="2.2"/><path d="M6.3 5.1 V3.6 C6.3 2.8 6.8 2.3 7.5 2.3 H9.6 C10.3 2.3 10.8 2.8 10.8 3.6 V5.1"/><path d="M1.3 8.4 C4 10 6.5 10.4 8.5 10.4 C10.5 10.4 13 10 15.7 8.4"/><circle cx="8.5" cy="10.4" r="1.3"/></g></svg>
<div class="t" style="left:376.80px;top:435.84px;font-size:12.0px;letter-spacing:0.030px;color:#3a3d48;"><span style="-webkit-text-stroke:0.3px #3a3d48;">Grado en Marketing</span> · Universidad Complutense de Madrid</div>
<div class="t" style="left:376.80px;top:454.36px;font-size:10.5px;letter-spacing:0.010px;color:#8c8c8c;">Sep 2017 - Jun 2020 (3 años)</div>
<svg style="position:absolute;left:352px;top:482px" width="18" height="18" viewBox="0 0 18 18"><g fill="none" stroke="#5c6068" stroke-width="1.25" stroke-linecap="round" stroke-linejoin="round"><path d="M9.5 2.1 H14.3 C15.8 2.1 16.9 3.2 16.9 4.7 V7.9 C16.9 8.6 16.6 9.3 16.1 9.8 L9.5 16.3 C8.8 17 7.8 17 7.1 16.3 L2.1 11.3 C1.5 10.6 1.5 9.7 2.1 9 L7.8 2.9 C8.3 2.4 8.9 2.1 9.5 2.1 Z"/><circle cx="13.6" cy="5.2" r="1.1"/><path d="M5.6 10.5 L7.3 12.8"/></g></svg>
<div style="position:absolute;left:378.7px;top:481.2px;width:65.30000000000001px;height:19.5px;background:#dfe1fb;border:1px solid #b9bdf0;border-radius:3px;box-sizing:border-box"></div>
<div class="t" style="left:384.50px;top:490.88px;font-size:9.0px;letter-spacing:-0.067px;color:#3a3d48;">Referenciado</div>
<div style="position:absolute;left:452.8px;top:481.2px;width:83.99999999999994px;height:19.5px;background:#fdf1c6;border:1px solid #efd98c;border-radius:3px;box-sizing:border-box"></div>
<div class="t" style="left:459.20px;top:490.88px;font-size:9.0px;letter-spacing:-0.170px;color:#3a3d48;">Francés avanzado</div>
<div style="position:absolute;left:544.8px;top:481.2px;width:52.0px;height:19.5px;background:#ebf5d5;border:1px solid #cfe5a6;border-radius:3px;box-sizing:border-box"></div>
<div class="t" style="left:551.20px;top:490.88px;font-size:9.0px;letter-spacing:0.060px;color:#3a3d48;">Consultor</div>
<div style="position:absolute;left:351px;top:522.5px;width:511.5px;height:29.0px;background:#f3f2ef;border:1px solid #e6e4df;border-radius:6px;box-sizing:border-box"></div>
<svg style="position:absolute;left:360.8px;top:526.5px" width="21" height="21" viewBox="0 0 46 46">
<defs><clipPath id="ac3"><circle cx="23" cy="23" r="23"/></clipPath><filter id="af3" x="-10%" y="-10%" width="120%" height="120%"><feGaussianBlur stdDeviation="1.20"/></filter></defs>
<g clip-path="url(#ac3)"><g filter="url(#af3)"><rect width="46" height="46" fill="#f6f4ef"/>
<ellipse cx="5" cy="9" rx="6" ry="6" fill="#4a4a34"/>
<ellipse cx="3" cy="24" rx="6" ry="11" fill="#b98a5c"/>
<path d="M30 8 C38 5 46 10 46 20 L46 46 L28 46 L31 24 Z" fill="#3b4a33"/>
<ellipse cx="40" cy="32" rx="6" ry="8" fill="#55703f"/>
<path d="M5 38 C3 26 5 11 11 7 C17 3 25 4 28 9 C32 15 30 28 32 37 Z" fill="#c4a57e"/>
<path d="M7 34 C6 25 8 16 12 11" stroke="#e2cba6" stroke-width="3" fill="none"/>
<path d="M25 12 C28 18 28 28 27 36" stroke="#8a6a4a" stroke-width="2" fill="none"/>
<ellipse cx="16.5" cy="18" rx="6.6" ry="8.8" fill="#e9ccb4"/>
<path d="M12 15.5 H14.5 M18 15.5 H20.5" stroke="#7a5a48" stroke-width="0.9"/>
<path d="M13 22 Q16.5 24.3 20 22" stroke="#b07a6a" stroke-width="1" fill="none"/>
<path d="M15 46 C17 39 22 35 28 34 C33 34 36 38 38 46 Z" fill="#1c1d22"/>
<path d="M7 46 C8 40 11 35 15 33 L20 38 L17 46 Z" fill="#e3d6c8"/></g></g></svg>
<div class="t" style="left:389.30px;top:537.06px;font-size:10.5px;letter-spacing:-0.226px;color:#3a3d48;"><span style="font-weight:700;">@mariorodriguez</span></div>
<div class="t" style="left:482.10px;top:537.06px;font-size:10.5px;letter-spacing:-0.098px;color:#3a3d48;">Échale un vistazo a este candidato. ¿Puede encajar en alguno de tus procesos?</div>
<div style="position:absolute;left:351px;top:568.5px;width:662.5px;height:114.5px;background:#fff;border:1px solid #e6e4de;border-radius:7px;box-sizing:border-box"></div>
<div style="position:absolute;left:365.7px;top:587.7px;width:14px;height:14px;border-radius:50%;background:#c9f0dc;border:1px solid #a5dfc2;box-sizing:border-box"></div>
<div class="t" style="left:388.20px;top:594.54px;font-size:12.0px;letter-spacing:-0.002px;color:#3a3d48;"><span style="-webkit-text-stroke:0.3px #3a3d48;">Programador Senior Python de Soluciones IOT</span> · Ciudad Real</div>
<svg style="position:absolute;left:732px;top:585px" width="19" height="19" viewBox="0 0 19 19"><g fill="none" stroke="#2ba876" stroke-width="1.2" stroke-linecap="round" stroke-linejoin="round"><rect x="4.2" y="6.3" width="10.6" height="9.3" rx="2.2"/><path d="M4.2 9 H3.3 C2.6 9 2.2 9.5 2.2 10 V12.3 C2.2 12.9 2.6 13.2 3.3 13.2 H4.2 M14.8 9 H15.7 C16.4 9 16.8 9.5 16.8 10 V12.3 C16.8 12.9 16.4 13.2 15.7 13.2 H14.8"/><path d="M9.5 6.3 V4.3"/><circle cx="9.5" cy="3.2" r="1"/><path d="M7.5 9.6 V10.4 M11.8 9.6 V10.4 M8 13.3 H11"/><path d="M6 15.6 L5.9 17.3 L7.6 15.6"/></g></svg>
<svg style="position:absolute;left:761px;top:585px" width="19" height="19" viewBox="0 0 19 19"><g fill="none" stroke="#d44a5e" stroke-width="1.2" stroke-linecap="round" stroke-linejoin="round"><path d="M6.5 3.2 H11.5 C12.8 3.2 13.6 4 13.6 5.3 V13.5 C13.6 14.8 12.8 15.6 11.5 15.6 H4.7 C3.4 15.6 2.6 14.8 2.6 13.5 V5.3 C2.6 4.5 2.9 4 3.4 3.6"/><path d="M13.6 8.2 L16.6 5.6 C17.5 4.9 18.3 5.3 18.3 6.3 V12.6 C18.3 13.6 17.5 14 16.6 13.3 L13.6 10.8"/><path d="M3 2.2 L18 17.2"/></g></svg>
<div style="position:absolute;left:793px;top:585px;width:17.5px;height:19.700000000000045px;background:#e9ecf7;border-radius:3px"></div>
<div class="t" style="left:798.95px;top:595.03px;font-size:10.0px;letter-spacing:-0.060px;color:#3b404c;">5</div>
<div class="t" style="left:388.20px;top:613.66px;font-size:10.5px;letter-spacing:0.006px;color:#8c8c8c;">Inscripción: 10/09/2023 | Fuente: Bizneo</div>
<div class="t" style="left:388.20px;top:647.06px;font-size:10.5px;letter-spacing:0.003px;color:#3a3d48;">Nuevos candidatos - Pendiente</div>
<div style="position:absolute;left:388.1px;top:660.6px;width:18.299999999999955px;height:2.3999999999999773px;background:#7b93cf;border-radius:1.5px"></div>
<div style="position:absolute;left:409.1px;top:660.6px;width:18.299999999999955px;height:2.3999999999999773px;background:#7b93cf;border-radius:1.5px"></div>
<div style="position:absolute;left:430.0px;top:660.6px;width:18.30000000000001px;height:2.3999999999999773px;background:#7b93cf;border-radius:1.5px"></div>
<div style="position:absolute;left:451.0px;top:660.6px;width:18.30000000000001px;height:2.3999999999999773px;background:#dadada;border-radius:1.5px"></div>
<div style="position:absolute;left:471.9px;top:660.6px;width:18.30000000000001px;height:2.3999999999999773px;background:#dadada;border-radius:1.5px"></div>
<div style="position:absolute;left:492.9px;top:660.6px;width:18.30000000000001px;height:2.3999999999999773px;background:#dadada;border-radius:1.5px"></div>
<div style="position:absolute;left:513.8px;top:660.6px;width:18.300000000000068px;height:2.3999999999999773px;background:#dadada;border-radius:1.5px"></div>
<div style="position:absolute;left:534.8px;top:660.6px;width:18.200000000000045px;height:2.3999999999999773px;background:#dadada;border-radius:1.5px"></div>
<svg style="position:absolute;left:349px;top:692px" width="18" height="18" viewBox="0 0 18 18"><g fill="none" stroke="#7d88cf" stroke-width="1.2" stroke-linecap="round" stroke-linejoin="round"><path d="M1.9 14.4 H15.8 M3.3 14.4 V6.5 L9.3 3.3 V14.4 M9.3 6.3 H14.6 V14.4"/><path d="M5.4 8.4 V8.9 M7.4 8.4 V8.9 M5.4 11.7 V12.2 M7.4 11.7 V12.2"/></g></svg>
<div class="t" style="left:371.70px;top:701.16px;font-size:10.5px;letter-spacing:-0.061px;color:#8c8c8c;"><span style="color:#3a3d48;font-weight:700;">7</span> candidaturas más</div>
<div class="t" style="left:477.80px;top:701.16px;font-size:10.5px;letter-spacing:-0.045px;color:#5b5fb4;">Ver todas</div>
<div style="position:absolute;left:335px;top:727.5px;width:697.5px;height:72.5px;background:#fff;border:1px solid #e9e7e2;border-radius:6px;box-sizing:border-box"></div>
<svg style="position:absolute;left:355.6px;top:747.8px" width="46" height="46" viewBox="0 0 46 46">
<defs><clipPath id="ac4"><circle cx="23" cy="23" r="23"/></clipPath><filter id="af4" x="-10%" y="-10%" width="120%" height="120%"><feGaussianBlur stdDeviation="0.80"/></filter></defs>
<g clip-path="url(#ac4)"><g filter="url(#af4)"><rect width="46" height="46" fill="#c9a99a"/>
<ellipse cx="23" cy="14" rx="19" ry="14" fill="#7a4c3a"/>
<ellipse cx="21" cy="9" rx="8" ry="6" fill="#4e2e22"/>
<ellipse cx="23" cy="26" rx="9" ry="11" fill="#e2bfa3"/></g></g></svg>
<div class="t" style="left:412.00px;top:753.72px;font-size:13.5px;letter-spacing:0.116px;color:#262a3e;"><span style="-webkit-text-stroke:0.3px #262a3e;">Anna Roigé Orgaz</span></div>
<div style="position:absolute;left:943.5px;top:741px;width:77.5px;height:25px;background:#fff;border:1px solid #e8e6e1;border-radius:6px;box-sizing:border-box"></div>
<div class="t" style="left:969.60px;top:753.36px;font-size:10.5px;letter-spacing:-0.158px;color:#1d2538;">Acciones</div>
</div></body></html>
